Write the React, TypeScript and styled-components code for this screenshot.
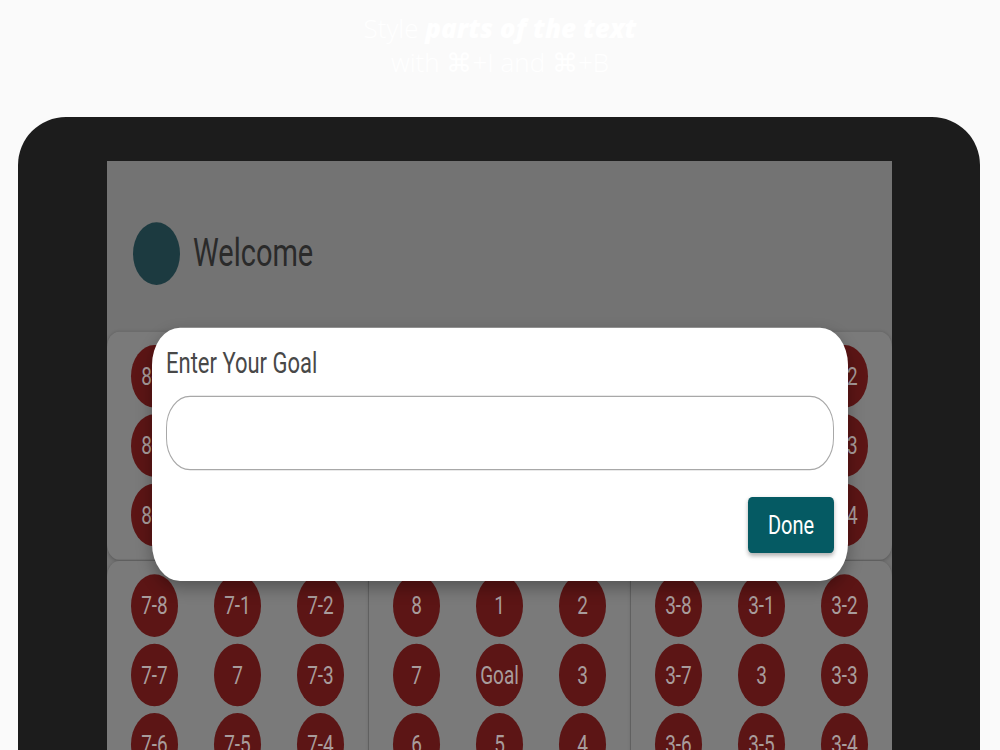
import styled, { createGlobalStyle } from "styled-components";

const GlobalStyle = createGlobalStyle`
  html, body {
    margin: 0;
    padding: 0;
    background: #fafafa;
    overflow: hidden;
  }
  body {
    font-family: Roboto, "Liberation Sans", sans-serif;
  }
`;

const Page = styled.div`
  width: 1000px;
  height: 750px;
  display: flex;
  flex-direction: column;
  align-items: center;
  overflow: hidden;
`;

const Caption = styled.div`
  padding-top: 11px;
  font-family: "Open Sans", "DejaVu Sans", sans-serif;
  font-size: 26px;
  line-height: 34px;
  font-weight: 300;
  color: #ffffff;
  text-align: center;

  b {
    font-weight: 800;
    font-style: italic;
  }
`;

const Device = styled.div`
  align-self: flex-start;
  margin: 38px 0 0 18px;
  width: 962px;
  height: 700px;
  flex-shrink: 0;
  box-sizing: border-box;
  padding: 44px 88px 0 89px;
  background: #1c1c1c;
  border-radius: 48px 48px 0 0;
`;

const Screen = styled.div`
  width: 785px;
  height: 656px;
  background: #737373;
  overflow: hidden;
`;

// the device capture is stretched vertically, so the app is drawn at its
// natural size and scaled
const Content = styled.div`
  position: relative;
  width: 100%;
  transform: scaleY(1.3333);
  transform-origin: top left;
`;

const Header = styled.div`
  height: 128px;
  box-sizing: border-box;
  padding: 46px 26px 0;
  display: flex;
  align-items: flex-start;
  gap: 13px;
`;

const Avatar = styled.div`
  width: 47px;
  height: 47px;
  border-radius: 50%;
  background: #1c3a40;
`;

const Title = styled.div`
  font-size: 29px;
  line-height: 47px;
  color: #2a2a2a;
`;

const Board = styled.div`
  display: grid;
  grid-template-columns: repeat(3, 1fr);
  gap: 1px;
`;

const Block = styled.div`
  background: #7a7a7a;
  border-radius: 12px;
  box-shadow: 0 1px 3px rgba(0, 0, 0, 0.22);
  padding: 10px 6px;
  display: grid;
  grid-template-columns: repeat(3, 1fr);
  row-gap: 5px;
  justify-items: center;
`;

const Cell = styled.div`
  width: 47px;
  height: 47px;
  border-radius: 50%;
  background: #5c1515;
  color: #a89c9c;
  font-size: 19px;
  display: flex;
  align-items: center;
  justify-content: center;
`;

const Modal = styled.div`
  position: absolute;
  left: 45px;
  top: 125px;
  width: 696px;
  height: 190px;
  box-sizing: border-box;
  padding: 14px 14px 21px;
  background: #ffffff;
  border-radius: 28px;
  box-shadow: 0 5px 14px rgba(0, 0, 0, 0.3);
  display: flex;
  flex-direction: column;
`;

const ModalTitle = styled.div`
  font-size: 22px;
  line-height: 26px;
  color: #484848;
`;

const GoalInput = styled.input`
  margin-top: 11px;
  height: 56px;
  box-sizing: border-box;
  border: 1px solid #a8a8a8;
  border-radius: 24px;
  padding: 0 18px;
  font: inherit;
  font-size: 18px;
  outline: none;
`;

const Actions = styled.div`
  margin-top: auto;
  display: flex;
  justify-content: flex-end;
`;

const DoneButton = styled.button`
  width: 86px;
  height: 42px;
  border: none;
  border-radius: 4px;
  background: #055a63;
  color: #ffffff;
  font-family: Roboto, "Liberation Sans", sans-serif;
  font-size: 20px;
  font-weight: 400;
  box-shadow: 0 2px 4px rgba(0, 0, 0, 0.3);
`;

// outer areas in the order they sit on the 3x3 board
const areas = ["8", "1", "2", "7", "", "3", "6", "5", "4"];
// positions inside one area: 8 1 2 / 7 c 3 / 6 5 4
const spots = ["8", "1", "2", "7", "", "3", "6", "5", "4"];

function labelFor(area: string, spot: string) {
  if (area === "") {
    return spot === "" ? "Goal" : spot;
  }
  if (spot === "") return area;
  return `${area}-${spot}`;
}

export default function App() {
  return (
    <>
      <GlobalStyle />
      <Page>
        <Caption>
          Style <b>parts of the text</b>
          <br />
          with ⌘+I and ⌘+B
        </Caption>
        <Device>
          <Screen>
            <Content>
              <Header>
                <Avatar />
                <Title>Welcome</Title>
              </Header>
              <Board>
                {areas.map((area, a) => (
                  <Block key={a}>
                    {spots.map((spot, s) => (
                      <Cell key={s}>{labelFor(area, spot)}</Cell>
                    ))}
                  </Block>
                ))}
              </Board>
              <Modal>
                <ModalTitle>Enter Your Goal</ModalTitle>
                <GoalInput />
                <Actions>
                  <DoneButton>Done</DoneButton>
                </Actions>
              </Modal>
            </Content>
          </Screen>
        </Device>
      </Page>
    </>
  );
}
